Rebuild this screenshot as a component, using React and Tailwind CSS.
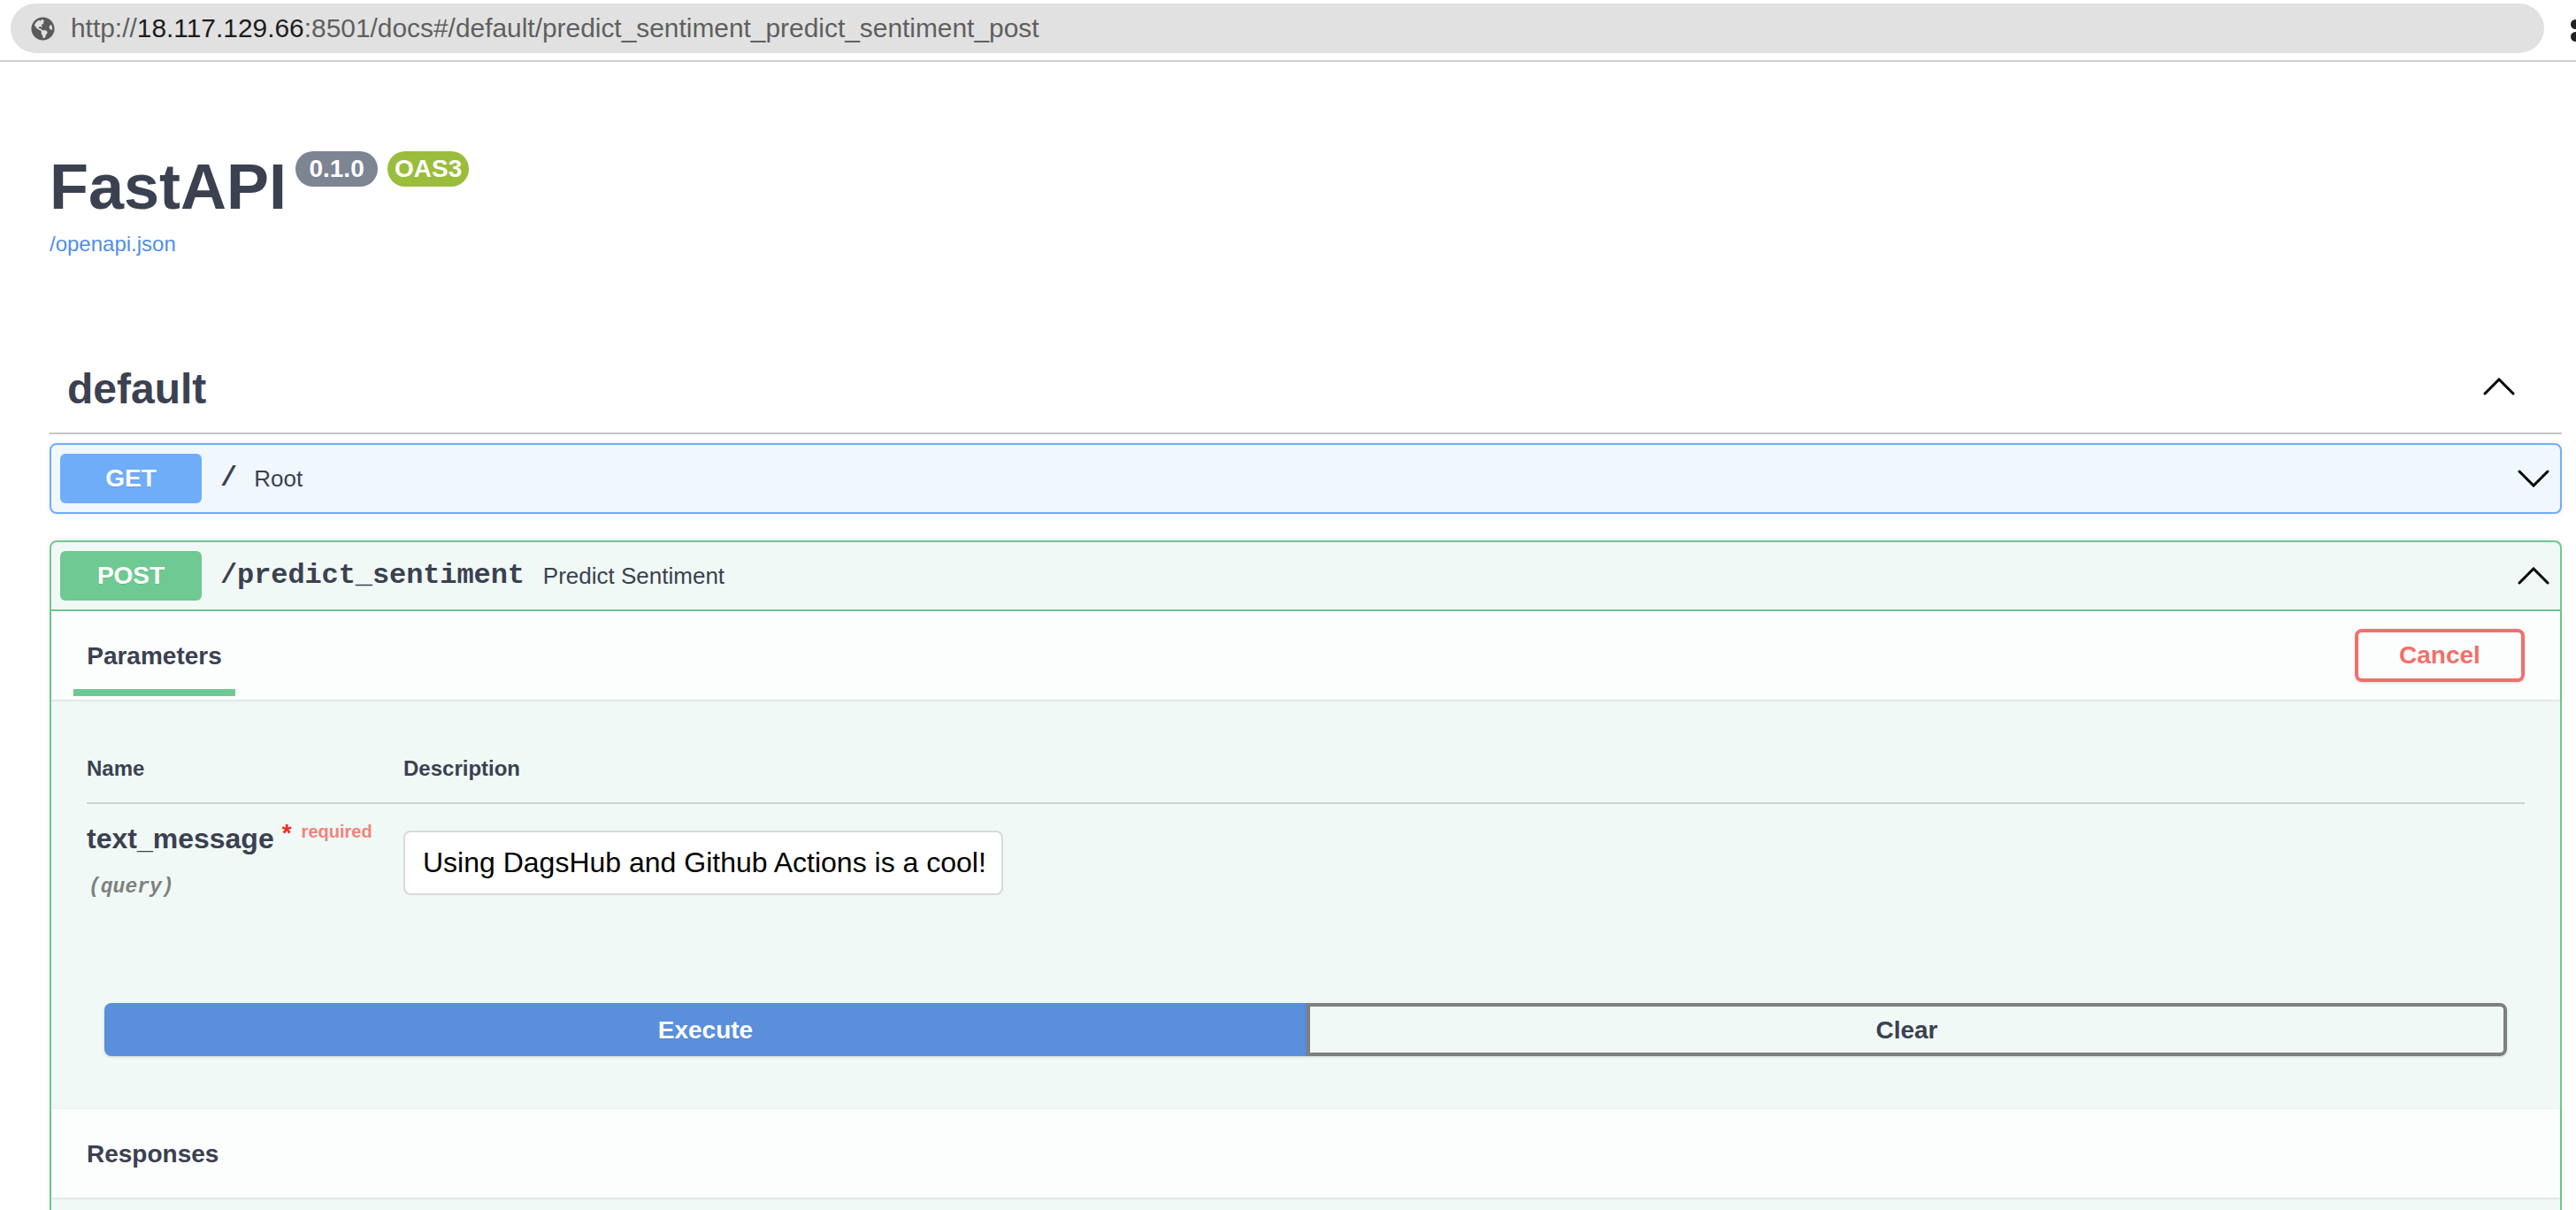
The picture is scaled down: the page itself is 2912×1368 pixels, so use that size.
import React from "react";
import { FaGlobeAmericas } from "react-icons/fa";

const Chevron = ({ up, className }) => (
  <svg viewBox="0 0 36 20" className={`w-[36px] h-[20px] shrink-0 ${className || ""}`} fill="none" stroke="#000" strokeWidth="3" strokeLinecap="round" strokeLinejoin="miter">
    {up ? <polyline points="2,18 18,2 34,18" /> : <polyline points="2,2 18,18 34,2" />}
  </svg>
);

const App = () => {
  return (
    <div className="h-[1368px] overflow-hidden bg-white font-['Liberation_Sans',Arial,sans-serif] text-[#3b4151]">
      {/* Barra del navegador */}
      <div className="h-[70px] border-b-2 border-[#cfcfcf] pt-1 pl-3 flex items-start">
        <div className="w-[2864px] h-[56px] rounded-[28px] bg-[#e1e1e1] flex items-center pl-[23px] gap-[18px]">
          <FaGlobeAmericas className="w-[27px] h-[27px] text-[#5b5b5b]" />
          <span className="text-[29.9px] text-[#5f5f5f] whitespace-nowrap">
            http://<span className="text-[#1c1c1c]">18.117.129.66</span>:8501/docs#/default/predict_sentiment_predict_sentiment_post
          </span>
        </div>
        <div className="ml-auto mt-[18px] flex flex-col gap-[3px]">
          <div className="w-[6px] h-[11px] rounded-l-full bg-[#222]" />
          <div className="w-[6px] h-[11px] rounded-l-full bg-[#222]" />
        </div>
      </div>

      <div className="pl-14 pr-4">
        {/* Titulo */}
        <div className="pt-[101px] flex items-start">
          <h1 className="text-[72px] leading-[80px] font-bold">FastAPI</h1>
          <span className="ml-[10px] w-[93px] h-[40px] rounded-[20px] bg-[#7d8492] text-white text-[28px] font-bold flex items-center justify-center">0.1.0</span>
          <span className="ml-[11px] w-[92px] h-[40px] rounded-[20px] bg-[#9abd3c] text-white text-[28px] font-bold flex items-center justify-center">OAS3</span>
        </div>
        <a className="block mt-[9px] text-[24px] leading-[32px] text-[#4f8fe3]">/openapi.json</a>

        {/* Seccion default */}
        <div className="mt-[118px] h-[81px] border-b-2 border-[#c4c5ca] pl-[20px] pr-[53px] pb-[19px] flex items-center justify-between">
          <h2 className="text-[48px] leading-[60px] font-bold">default</h2>
          <Chevron up className="mb-[6px]" />
        </div>

        {/* GET */}
        <div className="mt-[10px] h-[80px] rounded-lg border-2 border-[#6fadf9] bg-[#f0f7ff] px-[10px] flex items-center shadow-[0_0_6px_rgba(0,0,0,0.08)]">
          <span className="w-[160px] h-[56px] rounded-md bg-[#6fadf9] text-white text-[28px] font-bold flex items-center justify-center [text-shadow:0_1px_0_rgba(0,0,0,0.1)]">GET</span>
          <span className="ml-[21px] text-[32px] font-bold font-['Liberation_Mono',monospace]">/</span>
          <span className="ml-[19px] text-[26px]">Root</span>
          <Chevron className="ml-auto mr-[2px]" />
        </div>

        {/* POST */}
        <div className="mt-[30px] rounded-lg border-2 border-[#6fc992] bg-[#f0f9f5] shadow-[0_0_6px_rgba(0,0,0,0.08)]">
          <div className="h-[78px] border-b-2 border-[#6fc992] px-[10px] flex items-center">
            <span className="w-[160px] h-[56px] rounded-md bg-[#6fc992] text-white text-[28px] font-bold flex items-center justify-center [text-shadow:0_1px_0_rgba(0,0,0,0.1)]">POST</span>
            <span className="ml-[21px] text-[32px] font-bold font-['Liberation_Mono',monospace] tracking-[-0.1px]">/predict_sentiment</span>
            <span className="ml-[21px] text-[26px]">Predict Sentiment</span>
            <Chevron up className="ml-auto mr-[2px]" />
          </div>

          <div className="h-[100px] bg-[#fcfdfd] pl-[25px] pr-[40px] flex items-center justify-between shadow-[0_1px_3px_rgba(0,0,0,0.12)]">
            <div className="w-[183px] h-[96px] self-start border-b-8 border-[#6fc992] pt-[14px] flex items-center justify-center text-[28px] font-bold">Parameters</div>
            <button className="w-[192px] h-[60px] rounded-lg border-4 border-[#f1706b] text-[#f1706b] text-[28px] font-bold shadow-[0_1px_3px_rgba(0,0,0,0.15)]">Cancel</button>
          </div>

          {/* Parametros */}
          <div className="px-[40px] pt-[62px]">
            <div className="h-[56px] border-b-2 border-[#ccd3d3] flex items-start text-[24px] leading-[32px] font-bold">
              <div className="w-[358px]">Name</div>
              <div>Description</div>
            </div>
            <div className="pt-[19px] flex items-start">
              <div className="w-[358px]">
                <div className="h-[40px] flex items-center">
                  <span className="text-[32px] font-bold">text_message</span>
                  <span className="ml-[9px] text-[28px] font-bold text-[#f02c25] -translate-y-[6px]">*</span>
                  <span className="ml-[11px] text-[20px] font-bold text-[#f2837d] -translate-y-[8px]">required</span>
                </div>
                <div className="mt-[19px] pl-[2px] text-[23px] leading-[32px] font-bold italic text-[#808080] font-['Liberation_Mono',monospace]">(query)</div>
              </div>
              <input
                readOnly
                value="Using DagsHub and Github Actions is a cool!"
                className="mt-[11px] w-[678px] h-[73px] rounded-lg border-2 border-[#d9d9d9] bg-white pl-[20px] text-[32px] text-black outline-none"
              />
            </div>
          </div>

          {/* Botones */}
          <div className="mt-[115px] px-[60px] pb-[60px] flex">
            <button className="w-[1359px] h-[60px] pt-[2px] rounded-l-lg bg-[#5a8fdc] text-white text-[28px] font-bold shadow-[0_1px_3px_rgba(0,0,0,0.15)] [text-shadow:0_1px_0_rgba(0,0,0,0.1)]">Execute</button>
            <button className="flex-1 h-[60px] pt-[1px] rounded-r-lg border-4 border-[#7f7f7f] text-[28px] font-bold shadow-[0_1px_3px_rgba(0,0,0,0.15)]">Clear</button>
          </div>

          <div className="h-[100px] pt-[2px] bg-[#fcfdfd] pl-[40px] flex items-center text-[28px] font-bold shadow-[0_1px_3px_rgba(0,0,0,0.12)]">Responses</div>
          <div className="h-[60px]" />
        </div>
      </div>
    </div>
  );
};

export default App;
